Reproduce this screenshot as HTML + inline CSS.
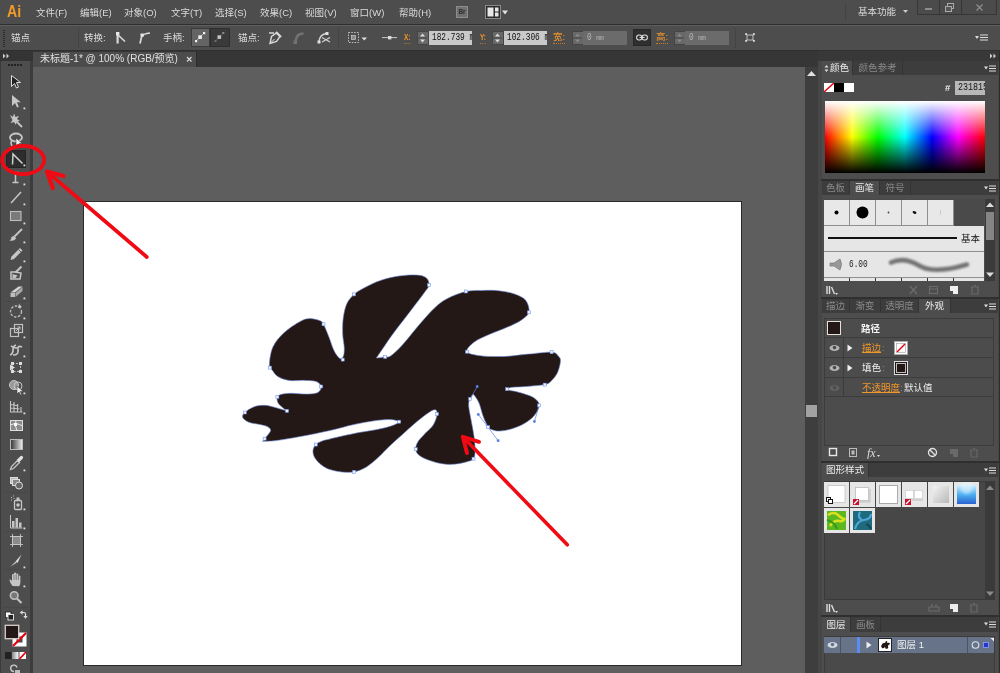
<!DOCTYPE html><html lang="zh"><head><meta charset="utf-8"><title>Adobe Illustrator</title><style>
*{margin:0;padding:0;box-sizing:border-box}
html,body{width:1000px;height:673px;overflow:hidden;background:#5d5d5d}
body{position:relative;opacity:0.999;font-family:"Liberation Sans","Noto Sans CJK SC",sans-serif;font-size:9.5px;color:#dadada;line-height:12px}
.a{position:absolute}
.t{position:absolute;white-space:nowrap}
.or{color:#f0962a}
.u{text-decoration:underline}
.menubar{left:0;top:0;width:1000px;height:25px;background:#4d4d4d;border-bottom:1px solid #2e2e2e}
.ctrl{left:0;top:25px;width:1000px;height:26px;background:#4d4d4d;border-bottom:1px solid #303030;border-top:1px solid #5f5f5f}
.tabs{left:33px;top:51px;width:785px;height:16px;background:#363636}
.doctab{left:33px;top:52px;width:164px;height:15px;background:#4c4c4c;border-right:1px solid #2c2c2c}
.tool{left:0;top:51px;width:33px;height:622px;background:#4d4d4d;border-right:3px solid #3c3c3c;border-left:1px solid #3a3a3a}
.toolhd{left:0;top:51px;width:33px;height:10px;background:#343434}
.canvas{left:33px;top:67px;width:772px;height:606px;background:#5e5e5e}
.vscroll{left:805px;top:67px;width:13px;height:606px;background:#3e3e3e}
.dock{left:818px;top:51px;width:182px;height:622px;background:#474747}
.dockhd{left:818px;top:51px;width:182px;height:10px;background:#383838}
.panel{position:absolute;left:822px;width:176px;background:#4d4d4d}
.tabrow{position:absolute;left:822px;width:176px;height:15px;background:#3d3d3d}
.tab{position:absolute;top:0;height:15px;text-align:center;line-height:15px;color:#8a8a8a;border-right:1px solid #333}
.tab.on{background:#4d4d4d;color:#ececec}
.inp{position:absolute;background:#c9c9c9;color:#111;height:14px;line-height:14px;font-family:"Liberation Mono","Noto Sans CJK SC",monospace;font-size:10px;white-space:nowrap;overflow:hidden}
.sq{display:inline-block;transform:scaleX(0.78);transform-origin:0 50%}
.inp.dis{background:#6b6b6b;color:#b4b4b4}
.spin{position:absolute;width:12px;height:14px;background:#686868;border:1px solid #454545}
</style></head><body>
<div class="a menubar"></div>
<div class="t" style="left:7px;top:1px;font-size:16.5px;line-height:20px;font-weight:bold;color:#f09a2a;transform:scaleX(0.86);transform-origin:0 0">Ai</div>
<div class="t" style="left:36px;top:7px">文件(F)</div>
<div class="t" style="left:80px;top:7px">编辑(E)</div>
<div class="t" style="left:124px;top:7px">对象(O)</div>
<div class="t" style="left:171px;top:7px">文字(T)</div>
<div class="t" style="left:215px;top:7px">选择(S)</div>
<div class="t" style="left:260px;top:7px">效果(C)</div>
<div class="t" style="left:305px;top:7px">视图(V)</div>
<div class="t" style="left:350px;top:7px">窗口(W)</div>
<div class="t" style="left:399px;top:7px">帮助(H)</div>
<div class="a" style="left:456px;top:6px;width:12px;height:12px;background:#707070;border:1px solid #8e8e8e;font-size:6.500px;line-height:10px;text-align:center;color:#2e2e2e;font-weight:bold">Br</div>
<svg class="a" style="left:485px;top:5px" width="26" height="14"><rect x="0.500" y="0.500" width="15" height="13" fill="#2c2c2c" stroke="#8a8a8a"/><rect x="2.500" y="2.500" width="6" height="9" fill="#e8e8e8"/><rect x="10" y="2.500" width="3.500" height="4" fill="#e8e8e8"/><rect x="10" y="7.500" width="3.500" height="4" fill="#e8e8e8"/><path d="M17 5.500h6l-3 4z" fill="#e2e2e2"/></svg>
<div class="a" style="left:845px;top:3px;width:1px;height:18px;background:#434343"></div>
<div class="t" style="left:858px;top:6px">基本功能</div>
<svg class="a" style="left:903px;top:10px" width="6" height="4"><path d="M0 0h5l-2.5 3z" fill="#ccc"/></svg>
<div class="a" style="left:917px;top:0;width:80px;height:15px;background:#4b4b4b;border:1px solid #363636;border-top:none"></div>
<div class="a" style="left:939px;top:0;width:1px;height:14px;background:#363636"></div><div class="a" style="left:961px;top:0;width:1px;height:14px;background:#363636"></div>
<div class="a" style="left:925px;top:8px;width:7px;height:2px;background:#8c8c8c"></div>
<svg class="a" style="left:944px;top:3px" width="12" height="10"><rect x="3.5" y="0.5" width="6" height="5" fill="none" stroke="#aaa"/><rect x="1.5" y="3.5" width="6" height="5" fill="#555" stroke="#aaa"/></svg>
<svg class="a" style="left:975px;top:3px" width="10" height="10"><path d="M1.500 1.500l6 6M7.500 1.500l-6 6" stroke="#8c8c8c" stroke-width="1.300"/></svg>
<div class="a ctrl"></div>
<div class="a" style="left:3px;top:30px;width:2px;height:17px;background:repeating-linear-gradient(#2c2c2c 0 1px,#4d4d4d 1px 2px)"></div>
<div class="t" style="left:11px;top:32px">锚点</div>
<div class="a" style="left:78px;top:28px;width:1px;height:20px;background:#444"></div>
<div class="t" style="left:84px;top:32px">转换:</div>
<svg class="a" style="left:114px;top:30px" width="40" height="16"><path d="M3.600 2v11.500" stroke="#d9d9d9" stroke-width="2.200" fill="none"/><path d="M4 5l7 6.500" stroke="#d9d9d9" stroke-width="1.700" fill="none"/><rect x="2" y="2" width="3.400" height="3.400" fill="#e6e6e6"/><path d="M26 13.500l1.500-6.500q1.500-3.500 8.500-4" stroke="#d9d9d9" stroke-width="1.700" fill="none"/><rect x="26.500" y="3.500" width="3.200" height="3.200" fill="#e6e6e6"/></svg>
<div class="t" style="left:163px;top:32px">手柄:</div>
<div class="a" style="left:191px;top:28px;width:19px;height:19px;background:#646464;border:1px solid #3a3a3a"></div>
<div class="a" style="left:210px;top:28px;width:20px;height:19px;background:#3a3a3a;border:1px solid #2e2e2e"></div>
<svg class="a" style="left:191px;top:28px" width="40" height="19"><path d="M5 13l8-8" stroke="#bdbdbd" stroke-width="0.800"/><rect x="7.300" y="7.300" width="3.600" height="3.600" fill="#f0f0f0"/><rect x="12" y="4" width="2.200" height="2.200" fill="#f0f0f0"/><rect x="4" y="12" width="2.200" height="2.200" fill="#f0f0f0"/><path d="M24 13.500l8.500-8.500" stroke="#6a6a6a" stroke-width="0.800"/><rect x="26.500" y="7.300" width="3.600" height="3.600" fill="#c4c4c4"/><rect x="31.300" y="4" width="2" height="2" fill="#8a8a8a"/><rect x="23.500" y="12" width="2" height="2" fill="#6a6a6a"/></svg>
<div class="t" style="left:238px;top:32px">锚点:</div>
<svg class="a" style="left:268px;top:29px" width="66" height="18"><path d="M1 4h5" stroke="#d8d8d8" stroke-width="1.500"/><path d="M2 14.500l1.500-7 5-3.500 3.500 3.500-3.500 5z" fill="none" stroke="#d8d8d8" stroke-width="1.400"/><path d="M2.500 14l4-4" stroke="#d8d8d8" stroke-width="1"/><path d="M8 3l5 5" stroke="#d8d8d8" stroke-width="2.200"/><path d="M27.500 14q0-9.500 8-9.500" stroke="#727272" stroke-width="2.600" fill="none"/><rect x="25.500" y="11.500" width="3.500" height="3.500" fill="#727272"/><path d="M51 13q0.500-8 8-8.500" stroke="#d0d0d0" stroke-width="1.500" fill="none"/><rect x="49.500" y="11.500" width="3" height="3" fill="#e0e0e0"/><rect x="57.500" y="3" width="3" height="3" fill="#e0e0e0"/><path d="M54 8.500l8 4.500M62 8.500l-8 4.500" stroke="#d0d0d0" stroke-width="1.200"/></svg>
<div class="a" style="left:338px;top:28px;width:1px;height:20px;background:#444"></div>
<svg class="a" style="left:347px;top:31px" width="22" height="13"><rect x="1.500" y="1.500" width="10" height="10" fill="none" stroke="#c4c4c4" stroke-dasharray="1.500 1.300"/><rect x="4.500" y="4.500" width="4" height="4" fill="#8a8a8a" stroke="#ddd" stroke-width="0.600"/><path d="M14.500 6.500h5.500l-2.750 3z" fill="#e0e0e0"/></svg>
<svg class="a" style="left:381px;top:33px" width="18" height="9"><path d="M1 4.6h15" stroke="#c8c8c8" stroke-width="1"/><rect x="7" y="3" width="3.4" height="3.4" fill="#dcdcdc"/></svg>
<div class="t or" style="left:404px;top:31px;border-bottom:1px dotted #c67c22;line-height:12px;font-size:9px;font-weight:bold;transform:scaleX(0.72);transform-origin:0 0">X:</div>
<div class="spin" style="left:417px;top:31px;height:14px"></div>
<svg class="a" style="left:417px;top:31px" width="11" height="14"><path d="M3 5.5h5l-2.5-3z" fill="#ddd"/><path d="M3 8.5h5l-2.5 3z" fill="#ddd"/><path d="M1 7h9" stroke="#444"/></svg>
<div class="inp" style="left:429px;top:31px;width:43px;padding-left:3.4px"><span class="sq">182.739 mm</span></div>
<div class="t or" style="left:480px;top:31px;border-bottom:1px dotted #c67c22;line-height:12px;font-size:9px;font-weight:bold;transform:scaleX(0.72);transform-origin:0 0">Y:</div>
<div class="spin" style="left:492px;top:31px;height:14px"></div>
<svg class="a" style="left:492px;top:31px" width="11" height="14"><path d="M3 5.5h5l-2.5-3z" fill="#ddd"/><path d="M3 8.5h5l-2.5 3z" fill="#ddd"/><path d="M1 7h9" stroke="#444"/></svg>
<div class="inp" style="left:504px;top:31px;width:43px;padding-left:3.4px"><span class="sq">102.306 mm</span></div>
<div class="t or" style="left:553px;top:31px;border-bottom:1px dotted #c67c22;line-height:12px;font-size:9.5px;font-weight:normal;transform:scaleX(1);transform-origin:0 0">宽:</div>
<div class="spin" style="left:572px;top:31px;height:14px"></div>
<svg class="a" style="left:572px;top:31px" width="11" height="14"><path d="M3 5.5h5l-2.5-3z" fill="#888"/><path d="M3 8.5h5l-2.5 3z" fill="#888"/><path d="M1 7h9" stroke="#444"/></svg>
<div class="inp dis" style="left:583px;top:31px;width:44px;padding-left:4px;line-height:14px"><span class="sq">0 <span style="font-size:8px">mm</span></span></div>
<div class="a" style="left:633px;top:29px;width:18px;height:17px;background:#2f2f2f;border:1px solid #272727"></div>
<svg class="a" style="left:635px;top:33px" width="14" height="9"><rect x="1.6" y="2" width="5.4" height="5" rx="2.4" fill="none" stroke="#dcdcdc" stroke-width="1.1"/><rect x="7" y="2" width="5.4" height="5" rx="2.4" fill="none" stroke="#dcdcdc" stroke-width="1.1"/><path d="M4.6 4.4h5" stroke="#dcdcdc" stroke-width="1.1"/></svg>
<div class="t or" style="left:656px;top:31px;border-bottom:1px dotted #c67c22;line-height:12px;font-size:9.5px;font-weight:normal;transform:scaleX(1);transform-origin:0 0">高:</div>
<div class="spin" style="left:674px;top:31px;height:14px"></div>
<svg class="a" style="left:674px;top:31px" width="11" height="14"><path d="M3 5.5h5l-2.5-3z" fill="#888"/><path d="M3 8.5h5l-2.5 3z" fill="#888"/><path d="M1 7h9" stroke="#444"/></svg>
<div class="inp dis" style="left:685px;top:31px;width:44px;padding-left:4px;line-height:14px"><span class="sq">0 <span style="font-size:8px">mm</span></span></div>
<div class="a" style="left:735px;top:28px;width:1px;height:20px;background:#444"></div>
<svg class="a" style="left:744px;top:32px" width="13" height="12"><rect x="3" y="3" width="6" height="5" fill="none" stroke="#cfcfcf" stroke-width="0.9"/><rect x="1.2" y="1.2" width="1.8" height="1.8" fill="#ddd"/><rect x="9" y="1.2" width="1.8" height="1.8" fill="#ddd"/><rect x="1.2" y="8" width="1.8" height="1.8" fill="#ddd"/><rect x="9" y="8" width="1.8" height="1.8" fill="#ddd"/></svg>
<svg class="a" style="left:975px;top:34px" width="14" height="8"><path d="M0 2h4l-2 3z" fill="#ddd"/><path d="M5 1h8M5 3.5h8M5 6h8" stroke="#ddd" stroke-width="1"/></svg>
<div class="a tabs"></div><div class="a doctab"></div>
<div class="t" style="left:40px;top:53px;color:#e0e0e0;font-size:10px">未标题-1* @ 100% (RGB/预览)</div>
<svg class="a" style="left:186px;top:56px" width="7" height="7"><path d="M1 1l4.5 4.5M5.500 1l-4.500 4.500" stroke="#ddd" stroke-width="1.1"/></svg>
<div class="a canvas"></div>
<div class="a" style="left:83px;top:201px;width:659px;height:465px;background:#fff;border:1px solid #2a2a2a"></div>
<div class="a vscroll"></div>
<svg class="a" style="left:807px;top:70px" width="10" height="7"><path d="M0 6h9l-4.500-5z" fill="#e0e0e0"/></svg>
<div class="a" style="left:806px;top:405px;width:11px;height:12px;background:#a2a2a2"></div><div class="a tool"></div><div class="a toolhd"></div>
<svg class="a" style="left:3px;top:53px" width="8" height="6"><path d="M0 0.500l2.500 2.500l-2.500 2.500zM3.500 0.500l2.500 2.500l-2.500 2.500z" fill="#cfcfcf"/></svg>
<div class="a" style="left:8px;top:64px;width:15px;height:2px;background:repeating-linear-gradient(90deg,#222 0 2px,#4d4d4d 2px 3px)"></div>
<div class="a" style="left:4px;top:148px;width:24px;height:1px;background:#474747"></div>
<div class="a" style="left:4px;top:301px;width:24px;height:1px;background:#474747"></div>
<div class="a" style="left:4px;top:492px;width:24px;height:1px;background:#474747"></div>
<div class="a" style="left:4px;top:531px;width:24px;height:1px;background:#474747"></div>
<div class="a" style="left:4px;top:569px;width:24px;height:1px;background:#474747"></div>
<div class="a" style="left:4px;top:607px;width:24px;height:1px;background:#474747"></div>
<div class="a" style="left:6px;top:150px;width:20px;height:18px;background:#2d2d2d;border:1px solid #252525"></div>
<svg class="a" style="left:0;top:0" width="33" height="673" viewBox="0 0 33 673"><g transform="translate(0,73)"><path d="M11.500 2.500v11l3-3 2 4.500 2-1-2-4.500h4z" fill="#222" stroke="#ddd" stroke-width="1"/></g><g transform="translate(0,92)"><path d="M12 3v11l3-3 2 4.500 1.800-0.800-2-4.500h4z" fill="#c6c6c6"/><rect x="23.500" y="15.500" width="1.800" height="1.800" fill="#e0e0e0"/></g><g transform="translate(0,111)"><path d="M10 4l3 2 1-3.500 1.500 3.500 3.500-1-2 3 3 2-3.500 0.500-0.500 3.500-2-3-3.500 1 2-3z" fill="#c6c6c6"/><path d="M15 9l7 7" stroke="#c6c6c6" stroke-width="1.800"/></g><g transform="translate(0,130)"><ellipse cx="16" cy="7.500" rx="6" ry="4" fill="none" stroke="#c6c6c6" stroke-width="1.800"/><path d="M12 10q-2 3 0 6" stroke="#c6c6c6" stroke-width="1.500" fill="none"/><path d="M16 8v8l2-2 1.500 3 1.200-0.600-1.500-3h3z" fill="#eee" stroke="#333" stroke-width="0.500"/></g><g transform="translate(0,149)"><path d="M12.500 15.500l0.500-10.500 9.500 9.500" fill="none" stroke="#cfcfcf" stroke-width="1.500"/><rect x="23.500" y="15.500" width="1.800" height="1.800" fill="#e0e0e0"/></g><g transform="translate(0,168)"><path d="M12 4.500h7M15.500 4.500v10M12.500 14.500h6" stroke="#c6c6c6" stroke-width="1.500" fill="none"/><rect x="23.500" y="15.500" width="1.800" height="1.800" fill="#e0e0e0"/></g><g transform="translate(0,188)"><path d="M11 15l10-11" stroke="#c6c6c6" stroke-width="1.500"/><rect x="23.500" y="15.500" width="1.800" height="1.800" fill="#e0e0e0"/></g><g transform="translate(0,207)"><rect x="10.500" y="4.500" width="10.500" height="9" fill="#7a7a7a" stroke="#bdbdbd" stroke-width="1.100"/><rect x="23.500" y="15.500" width="1.800" height="1.800" fill="#e0e0e0"/></g><g transform="translate(0,226)"><path d="M22 3l-7.500 7.500" stroke="#c6c6c6" stroke-width="1.800"/><path d="M13.800 9.800l2.400 2.400q-2 3.300-6.700 2.300 2.300-1 1.800-3.200z" fill="#c6c6c6"/><rect x="23.500" y="15.500" width="1.800" height="1.800" fill="#e0e0e0"/></g><g transform="translate(0,245)"><path d="M20 3l2.500 2.500-8.500 8.500-3.500 1 1-3.500z" fill="#c6c6c6"/><path d="M18.500 4.500l2.500 2.500" stroke="#4d4d4d" stroke-width="0.800"/><rect x="23.500" y="15.500" width="1.800" height="1.800" fill="#e0e0e0"/></g><g transform="translate(0,264)"><path d="M21.500 2.500l-6 6" stroke="#c6c6c6" stroke-width="2"/><path d="M11 8h4l6 1-1 6h-9z" fill="none" stroke="#c6c6c6" stroke-width="1.500"/><path d="M12.500 10l5 1.500-2 2.500h-3z" fill="#c6c6c6"/></g><g transform="translate(0,282)"><path d="M10.500 10.500l8-6h4l-7.500 6z" fill="#d2d2d2"/><path d="M10.500 11h4.500v4h-4.500z" fill="#bdbdbd"/><path d="M15.500 11l7-6v4l-7 6z" fill="#a8a8a8"/><rect x="23.500" y="15.500" width="1.800" height="1.800" fill="#e0e0e0"/></g><g transform="translate(0,302)"><circle cx="16" cy="9.500" r="5.500" fill="none" stroke="#c0c0c0" stroke-width="1.300" stroke-dasharray="2.500 1.500"/><path d="M19 2l3 3-4 1z" fill="#c6c6c6"/><rect x="23.500" y="15.500" width="1.800" height="1.800" fill="#e0e0e0"/></g><g transform="translate(0,321)"><rect x="10.500" y="7.500" width="8" height="8" fill="none" stroke="#c0c0c0" stroke-width="1.200"/><rect x="14.500" y="3.500" width="8" height="8" fill="none" stroke="#c0c0c0" stroke-width="1.200"/><path d="M16 10l4-4M17.500 6h2.500v2.500" stroke="#c0c0c0" stroke-width="1" fill="none"/><rect x="23.500" y="15.500" width="1.800" height="1.800" fill="#e0e0e0"/></g><g transform="translate(0,340)"><path d="M10 15q3-1 3-5t3-5M13 15q6 0 5-5t4-3M11 6q3 2 6 2" stroke="#c6c6c6" stroke-width="1.700" fill="none"/><rect x="23.500" y="15.500" width="1.800" height="1.800" fill="#e0e0e0"/></g><g transform="translate(0,358)"><rect x="12.500" y="5.500" width="8" height="8" fill="none" stroke="#c0c0c0" stroke-width="1" stroke-dasharray="2 1.500"/><rect x="11" y="4" width="3" height="3" fill="#ddd"/><rect x="19" y="4" width="3" height="3" fill="#ddd"/><rect x="11" y="12" width="3" height="3" fill="#ddd"/><rect x="19" y="12" width="3" height="3" fill="#ddd"/><path d="M10 6.500l5 3-5 3z" fill="#ddd"/></g><g transform="translate(0,377)"><circle cx="14" cy="8" r="4.500" fill="#999" stroke="#c6c6c6" stroke-width="1"/><circle cx="18" cy="9" r="4" fill="none" stroke="#c6c6c6" stroke-width="1"/><path d="M17 9v8l2-2 1.500 3 1.200-0.600-1.500-3h3z" fill="#eee" stroke="#333" stroke-width="0.500"/><rect x="23.500" y="15.500" width="1.800" height="1.800" fill="#e0e0e0"/></g><g transform="translate(0,397)"><path d="M10.500 4v11h12M10.500 7.500l8 1.500M10.500 11l9 1M14 5v10M17.500 7v8M21 10v5" stroke="#c6c6c6" stroke-width="1.100" fill="none"/><rect x="23.500" y="15.500" width="1.800" height="1.800" fill="#e0e0e0"/></g><g transform="translate(0,416)"><rect x="10.500" y="4.500" width="12" height="10" fill="#8c8c8c" stroke="#ddd" stroke-width="1"/><path d="M10.500 9q6-3 12 1M16 4.500q-2 5 1 10" stroke="#eee" stroke-width="1" fill="none"/><rect x="14" y="7" width="3" height="3" fill="#fff"/></g><g transform="translate(0,435)"><defs><linearGradient id="gt" x1="0" x2="1"><stop offset="0" stop-color="#333"/><stop offset="1" stop-color="#eee"/></linearGradient></defs><rect x="10.500" y="4.500" width="12" height="10" fill="url(#gt)" stroke="#bbb" stroke-width="1"/></g><g transform="translate(0,454)"><path d="M21.500 3.500l-3 3" stroke="#e0e0e0" stroke-width="3.200" stroke-linecap="round"/><path d="M18 6l-6.500 6.500-1 3 3-1 6.500-6.500" fill="none" stroke="#c6c6c6" stroke-width="1.300"/><rect x="23.500" y="15.500" width="1.800" height="1.800" fill="#e0e0e0"/></g><g transform="translate(0,473)"><rect x="10.500" y="4.500" width="7" height="6" fill="#bbb" stroke="#ddd"/><rect x="12.500" y="6.500" width="7" height="6" fill="#888" stroke="#ddd"/><circle cx="19" cy="12.500" r="3.500" fill="#666" stroke="#ddd"/></g><g transform="translate(0,493)"><rect x="14.500" y="7.500" width="7" height="9" rx="1" fill="none" stroke="#c6c6c6" stroke-width="1.300"/><rect x="16.500" y="4.500" width="3" height="3" fill="#c6c6c6"/><circle cx="18" cy="12" r="1.800" fill="#c6c6c6"/><path d="M11 4.500h1M13 3h1M11 7h1M13.500 5.500h1" stroke="#c6c6c6" stroke-width="1"/><rect x="23.500" y="15.500" width="1.800" height="1.800" fill="#e0e0e0"/></g><g transform="translate(0,512)"><path d="M10.500 3v13h12" stroke="#c6c6c6" stroke-width="1" fill="none"/><rect x="12" y="9" width="2.500" height="6.500" fill="#c6c6c6"/><rect x="15.500" y="6" width="2.500" height="9.500" fill="#c6c6c6"/><rect x="19" y="10.500" width="2.500" height="5" fill="#c6c6c6"/><rect x="23.500" y="15.500" width="1.800" height="1.800" fill="#e0e0e0"/></g><g transform="translate(0,531)"><rect x="12.500" y="5.500" width="8" height="8" fill="#8a8a8a" stroke="#c6c6c6"/><path d="M10 5.500h13M10 13.500h13M12.500 3v13M20.500 3v13" stroke="#c6c6c6" stroke-width="0.900"/></g><g transform="translate(0,551)"><path d="M21.500 3.500l-6 7 2 1.500z" fill="#e0e0e0"/><path d="M15.500 10.500l-5 5 6-3.500z" fill="#bdbdbd"/><rect x="23.500" y="15.500" width="1.800" height="1.800" fill="#e0e0e0"/></g><g transform="translate(0,570)"><path d="M12.500 16q-3-4-3-6.500 1.500-0.500 2.500 1.500v-6.500q1.200-1.200 2 0v-1.500q1.200-1.200 2.200 0v1q1.200-1 2.200 0.300v1.500q1.200-0.800 2 0.400v6q0 2.500-1.500 4z" fill="#c6c6c6"/><path d="M14 5v5M16.200 4v6M18.400 5v5" stroke="#4d4d4d" stroke-width="0.600"/><rect x="23.500" y="15.500" width="1.800" height="1.800" fill="#e0e0e0"/></g><g transform="translate(0,588)"><circle cx="14.200" cy="7.500" r="3.800" fill="#777" stroke="#c0c0c0" stroke-width="1.600"/><path d="M17 10.500l4.500 4.500" stroke="#c0c0c0" stroke-width="2.200"/></g>
<rect x="5.500" y="612" width="5.500" height="5.500" fill="#fff" stroke="#222" stroke-width="0.800"/><rect x="8" y="614.500" width="5.500" height="5.500" fill="#222" stroke="#eee" stroke-width="0.900"/>
<path d="M21.500 612.500h2.500q1.500 0 1.500 1.500v2.500" fill="none" stroke="#ddd" stroke-width="1.200"/><path d="M19.800 612.500l2.700-2.200v4.400zM25.500 618.800l-2.200-2.700h4.400z" fill="#ddd"/>
<rect x="12.500" y="632.500" width="14" height="14" fill="#fff"/><rect x="16.500" y="636.500" width="6" height="6" fill="#4a4a4a"/><path d="M13 646l13-13" stroke="#e60012" stroke-width="2.200"/>
<rect x="5.300" y="625.300" width="13.400" height="13.400" fill="#231815" stroke="#d8d0cc" stroke-width="1.300"/>
<rect x="5" y="652" width="6.500" height="7" fill="#222"/><defs><linearGradient id="g2" x1="0" x2="1"><stop offset="0" stop-color="#888"/><stop offset="1" stop-color="#fff"/></linearGradient></defs><rect x="12" y="652" width="6.500" height="7" fill="url(#g2)"/><rect x="19.500" y="652" width="6.500" height="7" fill="#fff"/><path d="M19.500 659l6.500-7" stroke="#e60012" stroke-width="1.800"/>
<path d="M17 667.500a3.200 3.200 0 1 0 -3 4" fill="none" stroke="#ccc" stroke-width="1.300"/><rect x="15" y="670" width="5" height="3" fill="#bbb"/>
</svg><div class="a dock"></div><div class="a dockhd"></div>
<div class="a" style="left:998.5px;top:51px;width:1.5px;height:622px;background:#2c2c2c"></div>
<div class="a" style="left:821px;top:179px;width:179px;height:2px;background:#2f2f2f"></div>
<div class="a" style="left:821px;top:297px;width:179px;height:2px;background:#2f2f2f"></div>
<div class="a" style="left:821px;top:461px;width:179px;height:2px;background:#2f2f2f"></div>
<div class="a" style="left:821px;top:615px;width:179px;height:2px;background:#2f2f2f"></div>
<svg class="a" style="left:990px;top:53px" width="8" height="6"><path d="M0 0.500l2.500 2.500l-2.500 2.500zM3.500 0.500l2.500 2.500l-2.500 2.500z" fill="#cfcfcf"/></svg>
<div class="panel" style="top:61px;height:118px"></div>
<div class="tabrow" style="top:61px;height:14px">
<div class="tab on" style="left:0px;width:31px;height:14px;line-height:14px"></div>
<div class="tab" style="left:31px;width:50px;height:14px;line-height:14px">颜色参考</div>
</div>
<svg class="a" style="left:984px;top:65px" width="13" height="8"><path d="M0 1.500h4l-2 3z" fill="#ddd"/><path d="M5 1h7M5 3.500h7M5 6h7" stroke="#ddd" stroke-width="1"/></svg>
<svg class="a" style="left:824px;top:64px" width="6" height="9"><path d="M0.500 3.500l2-2.500 2 2.500zM0.500 5.500l2 2.500 2-2.500z" fill="#ddd"/></svg>
<div class="t" style="left:830px;top:62px;color:#ececec">颜色</div>
<svg class="a" style="left:824px;top:83px" width="31" height="10"><rect x="0" y="0" width="10" height="9" fill="#fff"/><path d="M0 9l10-9" stroke="#e60012" stroke-width="1.500"/><rect x="10" y="0" width="10" height="9" fill="#000"/><rect x="20" y="0" width="10" height="9" fill="#fff"/></svg>
<div class="t" style="left:945px;top:82px;font-weight:bold;color:#eee">#</div>
<div class="inp" style="left:955px;top:81px;width:30px;height:14px;padding-left:3.4px;background:#b8b8b8;line-height:13px;font-size:11px"><span class="sq" style="transform:scaleX(0.76)">231815</span></div>
<div class="a" style="left:825px;top:101px;width:160px;height:72px;background:linear-gradient(to bottom,#fff 0%,rgba(255,255,255,0) 50%,rgba(0,0,0,0) 50%,#000 100%),linear-gradient(to right,#f00 0%,#ff0 17%,#0f0 33%,#0ff 50%,#00f 67%,#f0f 83%,#f00 100%)"></div>
<div class="panel" style="top:181px;height:116px"></div>
<div class="tabrow" style="top:181px;height:14px">
<div class="tab" style="left:0px;width:28px;height:14px;line-height:14px">色板</div>
<div class="tab on" style="left:28px;width:30px;height:14px;line-height:14px">画笔</div>
<div class="tab" style="left:58px;width:31px;height:14px;line-height:14px">符号</div>
</div>
<svg class="a" style="left:984px;top:185px" width="13" height="8"><path d="M0 1.500h4l-2 3z" fill="#ddd"/><path d="M5 1h7M5 3.500h7M5 6h7" stroke="#ddd" stroke-width="1"/></svg>
<div class="a" style="left:824px;top:199px;width:160px;height:82px;background:#8e8e8e"></div><div class="a" style="left:954px;top:199px;width:30px;height:27px;background:#4a4a4a"></div><div class="a" style="left:824px;top:199px;width:160px;height:1px;background:#4a4a4a"></div>
<div class="a" style="left:824px;top:200px;width:25px;height:25px;background:#e8e8e8"></div>
<div class="a" style="left:850px;top:200px;width:25px;height:25px;background:#e8e8e8"></div>
<div class="a" style="left:876px;top:200px;width:25px;height:25px;background:#e8e8e8"></div>
<div class="a" style="left:902px;top:200px;width:25px;height:25px;background:#e8e8e8"></div>
<div class="a" style="left:928px;top:200px;width:25px;height:25px;background:#e8e8e8"></div>
<svg class="a" style="left:824px;top:200px" width="130" height="25"><circle cx="12.500" cy="12.500" r="2" fill="#000"/><circle cx="38.500" cy="12.500" r="6" fill="#000"/><circle cx="64.500" cy="12.500" r="0.900" fill="#444"/><ellipse cx="90.500" cy="12.500" rx="2" ry="1.200" fill="#111" transform="rotate(20 90.500 12.500)"/><path d="M116.500 10v5" stroke="#bbb" stroke-width="0.600"/></svg>
<div class="a" style="left:824px;top:226px;width:160px;height:25px;background:#e6e6e6"></div>
<div class="a" style="left:828px;top:237px;width:129px;height:2px;background:#111"></div>
<div class="t" style="left:961px;top:233px;color:#111">基本</div>
<div class="a" style="left:824px;top:252px;width:160px;height:25px;background:#e6e6e6"></div>
<svg class="a" style="left:828px;top:257px" width="16" height="14"><path d="M2 6h4l6-4q3 5 0 11l-6-4h-4z" fill="#999" stroke="#777" stroke-width="0.700"/></svg>
<div class="t" style="left:849px;top:259px;color:#222;font-family:'Liberation Mono',monospace;font-size:10px"><span class="sq">6.00</span></div>
<svg class="a" style="left:885px;top:254px" width="100" height="24"><path d="M6 8.500q13-6 28 3t48-1" fill="none" stroke="#666" stroke-width="4.600" stroke-linecap="round" opacity="0.900" style="filter:blur(0.8px)"/></svg>
<div class="a" style="left:824px;top:278px;width:160px;height:3px;background:#e6e6e6"></div>
<div class="a" style="left:849px;top:278px;width:1px;height:3px;background:#333"></div>
<div class="a" style="left:875px;top:278px;width:1px;height:3px;background:#333"></div>
<div class="a" style="left:901px;top:278px;width:1px;height:3px;background:#333"></div>
<div class="a" style="left:927px;top:278px;width:1px;height:3px;background:#333"></div>
<div class="a" style="left:953px;top:278px;width:1px;height:3px;background:#333"></div>
<div class="a" style="left:985px;top:199px;width:10px;height:82px;background:#3a3a3a"></div>
<svg class="a" style="left:986px;top:202px" width="8" height="6"><path d="M0 5h8l-4-4.500z" fill="#ddd"/></svg>
<svg class="a" style="left:986px;top:272px" width="8" height="6"><path d="M0 0.500h8l-4 4.500z" fill="#ddd"/></svg>
<div class="a" style="left:986px;top:212px;width:8px;height:28px;background:#858585"></div>
<svg class="a" style="left:826px;top:284px" width="160" height="12"><path d="M1 10v-8M3.500 10v-8M5.500 3l3 7" stroke="#ddd" stroke-width="1.400" fill="none"/><path d="M9 9h3l-1.500 2z" fill="#ddd"/><path d="M84 2l7 8M91 2l-7 8" stroke="#6c6c6c" stroke-width="1.200"/><rect x="103.500" y="2.500" width="8" height="7" fill="none" stroke="#6c6c6c"/><path d="M103.500 5h8" stroke="#6c6c6c"/><path d="M124 2h8v8h-5v-3h-3z" fill="#eee"/><path d="M145 3h8M146 3v7h6v-7M148 1.500h2" stroke="#6a6a6a" stroke-width="1.200" fill="none"/></svg>
<div class="panel" style="top:299px;height:162px"></div>
<div class="tabrow" style="top:299px;height:14px">
<div class="tab" style="left:0px;width:28px;height:14px;line-height:14px">描边</div>
<div class="tab" style="left:28px;width:31px;height:14px;line-height:14px">渐变</div>
<div class="tab" style="left:59px;width:38px;height:14px;line-height:14px">透明度</div>
<div class="tab on" style="left:97px;width:32px;height:14px;line-height:14px">外观</div>
</div>
<svg class="a" style="left:984px;top:303px" width="13" height="8"><path d="M0 1.500h4l-2 3z" fill="#ddd"/><path d="M5 1h7M5 3.500h7M5 6h7" stroke="#ddd" stroke-width="1"/></svg>
<div class="a" style="left:824px;top:318px;width:170px;height:128px;background:#4c4c4c;border:1px solid #3c3c3c"></div>
<div class="a" style="left:825px;top:337px;width:168px;height:1px;background:#3c3c3c"></div>
<div class="a" style="left:825px;top:357px;width:168px;height:1px;background:#3c3c3c"></div>
<div class="a" style="left:825px;top:377px;width:168px;height:1px;background:#3c3c3c"></div>
<div class="a" style="left:825px;top:396px;width:168px;height:1px;background:#3c3c3c"></div>
<div class="a" style="left:843px;top:338px;width:1px;height:58px;background:#3c3c3c"></div>
<div class="a" style="left:827px;top:321px;width:14px;height:14px;background:#231815;border:1.5px solid #e4e0dc"></div>
<div class="t" style="left:861px;top:323px;font-weight:bold;color:#f4f4f4">路径</div>
<svg class="a" style="left:829px;top:344px" width="11" height="8"><ellipse cx="5.500" cy="4" rx="5" ry="3" fill="#b4b4b4"/><circle cx="5.500" cy="3.600" r="1.800" fill="#4c4c4c"/></svg>
<svg class="a" style="left:829px;top:364px" width="11" height="8"><ellipse cx="5.500" cy="4" rx="5" ry="3" fill="#b4b4b4"/><circle cx="5.500" cy="3.600" r="1.800" fill="#4c4c4c"/></svg>
<svg class="a" style="left:829px;top:384px" width="11" height="8"><ellipse cx="5.500" cy="4" rx="5" ry="3" fill="#606060"/><circle cx="5.500" cy="3.600" r="1.800" fill="#4c4c4c"/></svg>
<svg class="a" style="left:847px;top:344px" width="6" height="8"><path d="M0.500 0.500v7l5-3.500z" fill="#eee"/></svg>
<svg class="a" style="left:847px;top:364px" width="6" height="8"><path d="M0.500 0.500v7l5-3.500z" fill="#eee"/></svg>
<div class="t or u" style="left:862px;top:342px">描边</div><div class="t" style="left:882px;top:342px;color:#888">:</div>
<svg class="a" style="left:894px;top:341px" width="14" height="14"><rect x="0.500" y="0.500" width="13" height="13" fill="#fff" stroke="#aaa"/><rect x="2.500" y="2.500" width="9" height="9" fill="#fff" stroke="#999" stroke-width="0.600"/><path d="M3 11l8-8" stroke="#e60012" stroke-width="1.500"/></svg>
<div class="t" style="left:862px;top:362px;color:#eee">填色</div><div class="t" style="left:882px;top:362px;color:#888">:</div>
<svg class="a" style="left:894px;top:361px" width="14" height="14"><rect x="0.500" y="0.500" width="13" height="13" fill="#231815" stroke="#ddd"/><rect x="2.500" y="2.500" width="9" height="9" fill="#231815" stroke="#bbb" stroke-width="1"/></svg>
<div class="t or u" style="left:862px;top:382px">不透明度</div><div class="t" style="left:900px;top:382px;color:#888">:</div><div class="t" style="left:904px;top:382px;color:#eee">默认值</div>
<svg class="a" style="left:826px;top:447px" width="160" height="12"><rect x="3.500" y="1.500" width="7" height="7" fill="none" stroke="#e8e8e8" stroke-width="1.400"/><rect x="23.500" y="1.500" width="7" height="8" fill="none" stroke="#bbb"/><rect x="25.500" y="3.500" width="3" height="4" fill="#bbb"/><text x="41" y="10" font-family="Liberation Serif,serif" font-style="italic" font-size="12" fill="#ddd">fx</text><path d="M51 8h3l-1.500 2z" fill="#ddd"/><circle cx="106.500" cy="5.500" r="4" fill="none" stroke="#e0e0e0" stroke-width="1.400"/><path d="M103.500 2.500l6 6" stroke="#e0e0e0" stroke-width="1.400"/><path d="M124 2h8v8h-5v-3h-3z" fill="#6a6a6a"/><path d="M144 3h8M145 3v7h6v-7M147 1.500h2" stroke="#666" stroke-width="1.200" fill="none"/></svg>
<div class="panel" style="top:463px;height:152px"></div>
<div class="tabrow" style="top:463px;height:14px">
<div class="tab on" style="left:0px;width:47px;height:14px;line-height:14px">图形样式</div>
</div>
<svg class="a" style="left:984px;top:467px" width="13" height="8"><path d="M0 1.500h4l-2 3z" fill="#ddd"/><path d="M5 1h7M5 3.500h7M5 6h7" stroke="#ddd" stroke-width="1"/></svg>
<div class="a" style="left:824px;top:481px;width:171px;height:119px;background:#474747;border:1px solid #3a3a3a"></div>
<div class="a" style="left:824px;top:482px;width:25px;height:25px;background:#e6e6e6"></div>
<div class="a" style="left:850px;top:482px;width:25px;height:25px;background:#e6e6e6"></div>
<div class="a" style="left:876px;top:482px;width:25px;height:25px;background:#e6e6e6"></div>
<div class="a" style="left:902px;top:482px;width:25px;height:25px;background:#e6e6e6"></div>
<div class="a" style="left:928px;top:482px;width:25px;height:25px;background:#e6e6e6"></div>
<div class="a" style="left:954px;top:482px;width:25px;height:25px;background:#e6e6e6"></div>
<div class="a" style="left:824px;top:508px;width:25px;height:25px;background:#e6e6e6"></div>
<div class="a" style="left:850px;top:508px;width:25px;height:25px;background:#e6e6e6"></div>
<svg class="a" style="left:824px;top:482px" width="156" height="52"><defs><linearGradient id="sg" x1="0" y1="0" x2="1" y2="1"><stop offset="0" stop-color="#f4f4f4"/><stop offset="1" stop-color="#b8b8b8"/></linearGradient><linearGradient id="sb" x1="0" y1="0" x2="0" y2="1"><stop offset="0" stop-color="#cfeeff"/><stop offset="0.500" stop-color="#4db0f0"/><stop offset="1" stop-color="#2a63d0"/></linearGradient></defs><rect x="4" y="3.500" width="17" height="17" fill="#fff" stroke="#bbb" stroke-width="0.700"/><rect x="2.500" y="15.500" width="4" height="4" fill="#fff" stroke="#111"/><rect x="4.500" y="17.500" width="4" height="4" fill="#fff" stroke="#111"/><rect x="31.500" y="5.500" width="13" height="13" fill="#fff" stroke="#bbb" stroke-width="0.800"/><path d="M33 20h13v-13" stroke="#bbb" stroke-width="1" fill="none"/><rect x="29" y="17" width="6" height="6" fill="#c8102e"/><path d="M30 22l4-4" stroke="#fff" stroke-width="1.200"/><rect x="55.500" y="3.500" width="18" height="18" fill="#fff" stroke="#aaa" stroke-width="1"/><rect x="81.500" y="8.500" width="8" height="8" fill="#fff" stroke="#ccc" stroke-width="0.700"/><rect x="90.500" y="8.500" width="8" height="8" fill="#fff" stroke="#ccc" stroke-width="0.700"/><path d="M88 18h11" stroke="#bbb"/><rect x="81" y="17" width="6" height="6" fill="#c8102e"/><path d="M82 22l4-4" stroke="#fff" stroke-width="1.200"/><rect x="109" y="4" width="16" height="17" fill="url(#sg)"/><rect x="133" y="3" width="19" height="19" fill="url(#sb)"/><ellipse cx="142.500" cy="5" rx="6" ry="7" fill="#e8f8ff" opacity="0.550" style="filter:blur(1.5px)"/><rect x="3" y="29" width="19" height="19" fill="#5cb81e"/><path d="M4 33q6-4 10 0t7 4M6 44q4-6 9-5t6-3" stroke="#d8e020" stroke-width="2.500" fill="none"/><path d="M3 38q8 2 10 9" stroke="#2f9a1e" stroke-width="2" fill="none"/><rect x="29" y="29" width="19" height="19" fill="#1f6a7e"/><path d="M31 47q2-8 9-9t7-6M36 30q-3 5 2 8" stroke="#4da8d8" stroke-width="2.200" fill="none"/><path d="M42 42q3 1 5 5" stroke="#154a52" stroke-width="2" fill="none"/></svg>
<div class="a" style="left:985px;top:482px;width:10px;height:117px;background:#3a3a3a"></div>
<svg class="a" style="left:986px;top:485px" width="8" height="6"><path d="M0 5h8l-4-4.500z" fill="#8a8a8a"/></svg>
<svg class="a" style="left:986px;top:591px" width="8" height="6"><path d="M0 0.500h8l-4 4.500z" fill="#8a8a8a"/></svg>
<svg class="a" style="left:826px;top:602px" width="160" height="12"><path d="M1 10v-8M3.500 10v-8M5.500 3l3 7" stroke="#ddd" stroke-width="1.400" fill="none"/><path d="M9 9h3l-1.500 2z" fill="#ddd"/><path d="M103 5h10v4h-10zM106 5v-3M110 5v-3" stroke="#6c6c6c" stroke-width="1.200" fill="none"/><path d="M124 2h8v8h-5v-3h-3z" fill="#eee"/><path d="M144 3h8M145 3v7h6v-7M147 1.500h2" stroke="#6a6a6a" stroke-width="1.200" fill="none"/></svg>
<div class="panel" style="top:617px;height:56px"></div>
<div class="tabrow" style="top:617px;height:15px">
<div class="tab on" style="left:0px;width:29px;height:15px;line-height:15px">图层</div>
<div class="tab" style="left:29px;width:30px;height:15px;line-height:15px">画板</div>
</div>
<svg class="a" style="left:984px;top:621px" width="13" height="8"><path d="M0 1.500h4l-2 3z" fill="#ddd"/><path d="M5 1h7M5 3.500h7M5 6h7" stroke="#ddd" stroke-width="1"/></svg>
<div class="a" style="left:824px;top:636px;width:171px;height:37px;background:#4a4a4a;border:1px solid #3c3c3c;border-bottom:none"></div>
<div class="a" style="left:824px;top:637px;width:170px;height:16px;background:#667389"></div>
<div class="a" style="left:840px;top:637px;width:1px;height:16px;background:#4a5466"></div><div class="a" style="left:967px;top:637px;width:1px;height:16px;background:#4a5466"></div>
<div class="a" style="left:857px;top:637px;width:3px;height:16px;background:#5b8cf5"></div>
<svg class="a" style="left:827px;top:641px" width="11" height="8"><ellipse cx="5.500" cy="4" rx="5" ry="3" fill="#d4d8e0"/><circle cx="5.500" cy="3.600" r="1.800" fill="#667389"/></svg>
<svg class="a" style="left:866px;top:641px" width="6" height="8"><path d="M0.500 0.500v7l5-3.500z" fill="#eee"/></svg>
<svg class="a" style="left:878px;top:638px" width="15" height="14"><rect x="0.500" y="0.500" width="13" height="13" fill="#fff" stroke="#222"/><path d="M3 8q2-4 4-3l1-2q2 0 1 2 3-1 3 1-2 1-2 2 1 2-1 3-2 0-2-2-2 2-3 1z" fill="#231815"/></svg>
<div class="t" style="left:897px;top:639px;color:#f0f0f0">图层 1</div>
<svg class="a" style="left:970px;top:638px" width="26" height="14"><circle cx="5.500" cy="7" r="3.300" fill="none" stroke="#dfe3ea" stroke-width="1.100"/><rect x="13.500" y="4.500" width="5" height="5" fill="#2338c8" stroke="#8ea0ff" stroke-width="0.800"/><path d="M20.500 0h3.500v3.500z" fill="#eee"/></svg><svg class="a" style="left:0;top:0;pointer-events:none" width="1000" height="673" viewBox="0 0 1000 673">
<path d="M269.4 364.7C269.5 360.9 270.4 352.4 272.9 347.0C275.4 341.6 279.6 336.9 284.2 332.6C288.8 328.3 295.9 323.7 300.2 321.4C304.5 319.1 306.6 318.7 309.8 318.6C313.0 318.5 317.2 319.7 319.5 320.6C321.8 321.6 321.9 321.5 323.5 324.3C325.1 327.1 327.4 333.2 329.1 337.4C330.8 341.6 332.1 346.4 333.5 349.5C334.9 352.6 336.0 354.2 337.2 355.8C338.4 357.4 339.7 358.9 340.8 358.8C341.9 358.8 343.0 357.5 343.6 355.5C344.2 353.5 344.4 350.6 344.2 347.0C344.0 343.4 342.9 339.0 342.7 334.2C342.5 329.4 342.5 323.3 343.2 318.2C343.9 313.1 345.0 307.7 346.8 303.7C348.6 299.7 351.1 297.1 354.0 294.4C356.9 291.7 360.0 290.0 364.4 287.7C368.8 285.4 374.7 282.3 380.5 280.4C386.3 278.4 393.0 276.9 399.0 276.0C405.0 275.1 412.0 274.7 416.5 275.0C421.0 275.3 424.1 276.1 426.2 277.8C428.3 279.5 429.3 282.6 429.0 285.0C428.7 287.4 427.8 287.9 424.6 292.3C421.5 296.7 415.2 304.8 410.1 311.5C405.0 318.2 398.6 326.2 394.0 332.4C389.4 338.6 385.7 344.2 382.8 348.5C379.9 352.8 376.4 358.0 376.4 358.0C376.4 358.0 382.8 357.4 385.2 357.0C387.6 356.6 388.1 357.6 390.9 355.7C393.7 353.8 397.6 350.2 402.1 345.3C406.6 340.4 412.8 332.2 418.1 326.0C423.5 319.8 429.4 312.9 434.2 308.3C439.0 303.8 441.7 301.5 447.0 298.7C452.3 295.9 460.1 292.9 466.0 291.5C471.9 290.1 476.9 290.5 482.3 290.4C487.7 290.3 493.0 290.1 498.4 290.7C503.8 291.3 509.8 292.3 514.4 293.9C519.0 295.5 523.3 297.2 525.7 300.3C528.1 303.4 529.7 309.0 528.9 312.3C528.1 315.6 524.6 317.8 520.9 320.4C517.1 322.9 511.5 325.3 506.4 327.6C501.3 329.9 495.8 331.6 490.4 334.0C485.0 336.4 478.2 339.1 474.3 342.0C470.4 344.9 466.0 349.2 467.0 351.5C468.0 353.8 473.9 354.9 480.1 355.7C486.3 356.5 496.2 356.8 504.2 356.5C512.2 356.2 520.4 354.8 528.3 354.1C536.2 353.4 546.5 351.8 551.6 352.2C556.7 352.6 557.3 354.9 558.8 356.5C560.3 358.1 560.7 359.3 560.4 362.1C560.1 364.9 558.8 370.1 557.2 373.3C555.6 376.5 552.9 379.5 550.8 381.4C548.7 383.3 548.2 383.8 544.7 384.6C541.2 385.4 534.5 385.8 529.9 386.2C525.3 386.6 520.2 386.8 517.0 387.0C513.8 387.2 512.1 387.2 510.5 387.6C508.9 388.0 507.6 388.7 507.6 389.2C507.6 389.7 508.9 390.2 510.5 390.6C512.1 391.0 513.8 390.9 517.0 391.8C520.2 392.7 526.7 394.5 529.9 395.8C533.1 397.1 534.8 398.2 536.3 399.8C537.8 401.4 539.5 402.8 539.2 405.4C538.9 407.9 537.1 412.2 534.7 415.1C532.4 418.1 528.9 420.8 525.1 423.1C521.4 425.4 516.5 427.4 512.2 428.7C507.9 430.0 502.9 431.0 499.4 431.1C495.9 431.2 493.3 430.2 491.4 429.5C489.5 428.8 489.5 429.2 488.2 427.1C486.9 425.0 484.8 420.6 483.3 416.7C481.8 412.8 480.6 407.1 479.3 403.8C478.0 400.5 476.6 398.6 475.5 397.0C474.4 395.4 473.0 394.0 473.0 394.0C473.0 394.0 470.5 397.4 469.8 399.3C469.1 401.2 468.5 402.2 468.7 405.7C468.9 409.2 470.2 415.0 471.1 420.1C472.0 425.2 473.3 431.1 474.0 436.2C474.7 441.3 475.2 446.9 475.1 450.6C475.0 454.4 475.0 456.8 473.5 458.7C472.0 460.6 469.6 461.0 466.3 461.9C463.0 462.8 457.5 464.0 453.5 464.3C449.5 464.6 446.1 464.4 442.2 463.8C438.3 463.2 433.8 462.0 429.9 460.6C426.0 459.2 421.4 457.1 419.0 455.2C416.6 453.3 415.9 451.4 415.7 449.2C415.5 447.0 416.4 444.3 417.8 441.9C419.2 439.5 421.5 437.3 423.9 434.7C426.3 432.1 430.3 428.9 432.3 426.3C434.3 423.7 435.1 421.2 435.9 419.1C436.7 417.1 436.8 415.4 436.9 414.0C437.0 412.6 437.1 411.3 436.5 410.6C435.9 409.9 435.2 409.4 433.5 410.0C431.8 410.6 429.5 412.0 426.3 414.3C423.1 416.6 418.2 420.5 414.2 423.9C410.2 427.3 406.2 431.1 402.2 434.7C398.2 438.3 394.2 441.7 390.2 445.5C386.2 449.3 382.1 454.0 378.1 457.6C374.1 461.2 370.1 464.8 366.1 467.2C362.1 469.6 358.1 471.0 354.1 471.8C350.1 472.6 346.0 472.4 342.0 472.0C338.0 471.6 333.5 470.8 330.0 469.6C326.5 468.4 323.7 466.7 321.1 464.7C318.5 462.7 316.0 459.9 314.6 457.5C313.2 455.1 312.8 452.4 313.0 450.3C313.2 448.2 314.4 446.1 315.8 444.6C317.2 443.1 318.7 442.3 321.1 441.4C323.5 440.4 324.5 440.2 330.0 438.9C335.5 437.6 346.1 435.1 354.1 433.5C362.1 431.9 372.1 430.5 378.1 429.3C384.1 428.1 387.0 427.3 390.2 426.3C393.4 425.3 395.9 424.1 397.4 423.3C398.9 422.5 399.2 421.7 399.2 421.7C399.2 421.7 396.1 419.9 392.6 419.7C389.1 419.5 384.5 419.5 378.1 420.3C371.7 421.1 362.1 422.8 354.1 424.5C346.1 426.2 339.0 428.5 330.0 430.5C321.0 432.5 309.2 434.9 300.2 436.6C291.2 438.3 282.4 439.8 276.1 440.6C269.8 441.4 262.5 441.4 262.5 441.4C262.5 441.4 263.3 440.4 264.6 438.7C265.9 437.0 269.9 432.9 270.5 431.0C271.1 429.1 269.8 428.1 268.1 427.0C266.4 425.9 263.3 425.4 260.1 424.6C256.9 423.8 251.7 423.4 248.8 422.2C245.9 421.0 243.4 419.0 242.7 417.4C242.0 415.8 243.0 414.2 244.8 412.5C246.6 410.8 250.3 408.1 253.7 406.9C257.0 405.7 261.2 405.2 264.9 405.3C268.6 405.4 272.4 406.8 276.1 407.7C279.8 408.6 287.0 410.9 287.0 410.9C287.0 410.9 280.1 406.0 278.5 403.7C276.9 401.4 276.7 398.6 277.4 397.0C278.1 395.4 280.0 394.7 282.5 394.1C285.0 393.5 288.2 393.3 292.2 393.3C296.2 393.3 302.3 394.2 306.6 394.1C310.9 394.0 315.5 393.8 317.9 392.5C320.3 391.2 321.4 388.3 321.1 386.5C320.8 384.7 319.0 382.6 316.3 381.6C313.6 380.6 309.6 380.6 305.0 380.4C300.4 380.2 293.6 381.1 289.0 380.4C284.4 379.7 280.5 378.1 277.7 376.4C274.9 374.7 273.5 371.9 272.1 370.0C270.7 368.1 269.3 368.5 269.4 364.7Z" fill="#231815" stroke="#6d8ad8" stroke-width="0.6"/>
<path d="M470.2 399L477.2 386.5" stroke="#5a7fe0" stroke-width="0.7"/><circle cx="477.2" cy="386.5" r="1.4" fill="#5a7fe0"/>
<path d="M488.2 427.3L478.3 414.5" stroke="#5a7fe0" stroke-width="0.7"/><circle cx="478.3" cy="414.5" r="1.4" fill="#5a7fe0"/>
<path d="M488.2 427.3L498.1 440.7" stroke="#5a7fe0" stroke-width="0.7"/><circle cx="498.1" cy="440.7" r="1.4" fill="#5a7fe0"/>
<path d="M539.2 405.4L534.4 421.5" stroke="#5a7fe0" stroke-width="0.7"/><circle cx="534.4" cy="421.5" r="1.4" fill="#5a7fe0"/>
<rect x="268.5" y="366.1" width="3" height="3" fill="#eef2ff" stroke="#6f8fe6" stroke-width="0.55"/>
<rect x="322.0" y="322.8" width="3" height="3" fill="#eef2ff" stroke="#6f8fe6" stroke-width="0.55"/>
<rect x="341.2" y="358.1" width="3" height="3" fill="#eef2ff" stroke="#6f8fe6" stroke-width="0.55"/>
<rect x="352.5" y="292.9" width="3" height="3" fill="#eef2ff" stroke="#6f8fe6" stroke-width="0.55"/>
<rect x="427.5" y="283.5" width="3" height="3" fill="#eef2ff" stroke="#6f8fe6" stroke-width="0.55"/>
<rect x="383.7" y="355.5" width="3" height="3" fill="#eef2ff" stroke="#6f8fe6" stroke-width="0.55"/>
<rect x="464.5" y="290.0" width="3" height="3" fill="#eef2ff" stroke="#6f8fe6" stroke-width="0.55"/>
<rect x="527.4" y="310.8" width="3" height="3" fill="#eef2ff" stroke="#6f8fe6" stroke-width="0.55"/>
<rect x="465.6" y="350.2" width="3" height="3" fill="#eef2ff" stroke="#6f8fe6" stroke-width="0.55"/>
<rect x="550.1" y="350.7" width="3" height="3" fill="#eef2ff" stroke="#6f8fe6" stroke-width="0.55"/>
<rect x="543.2" y="383.1" width="3" height="3" fill="#eef2ff" stroke="#6f8fe6" stroke-width="0.55"/>
<rect x="505.6" y="387.6" width="3" height="3" fill="#eef2ff" stroke="#6f8fe6" stroke-width="0.55"/>
<rect x="537.7" y="403.9" width="3" height="3" fill="#eef2ff" stroke="#6f8fe6" stroke-width="0.55"/>
<rect x="486.7" y="425.6" width="3" height="3" fill="#eef2ff" stroke="#6f8fe6" stroke-width="0.55"/>
<rect x="468.7" y="397.5" width="3" height="3" fill="#eef2ff" stroke="#6f8fe6" stroke-width="0.55"/>
<rect x="472.0" y="457.2" width="3" height="3" fill="#eef2ff" stroke="#6f8fe6" stroke-width="0.55"/>
<rect x="414.2" y="447.7" width="3" height="3" fill="#eef2ff" stroke="#6f8fe6" stroke-width="0.55"/>
<rect x="435.4" y="412.5" width="3" height="3" fill="#eef2ff" stroke="#6f8fe6" stroke-width="0.55"/>
<rect x="352.6" y="470.3" width="3" height="3" fill="#eef2ff" stroke="#6f8fe6" stroke-width="0.55"/>
<rect x="314.3" y="443.1" width="3" height="3" fill="#eef2ff" stroke="#6f8fe6" stroke-width="0.55"/>
<rect x="397.7" y="420.2" width="3" height="3" fill="#eef2ff" stroke="#6f8fe6" stroke-width="0.55"/>
<rect x="263.1" y="437.2" width="3" height="3" fill="#eef2ff" stroke="#6f8fe6" stroke-width="0.55"/>
<rect x="243.3" y="411.0" width="3" height="3" fill="#eef2ff" stroke="#6f8fe6" stroke-width="0.55"/>
<rect x="285.5" y="409.4" width="3" height="3" fill="#eef2ff" stroke="#6f8fe6" stroke-width="0.55"/>
<rect x="275.9" y="395.5" width="3" height="3" fill="#eef2ff" stroke="#6f8fe6" stroke-width="0.55"/>
<rect x="319.6" y="385.0" width="3" height="3" fill="#eef2ff" stroke="#6f8fe6" stroke-width="0.55"/>
<ellipse cx="23.200" cy="160" rx="21" ry="14.200" fill="none" stroke="#f00a14" stroke-width="3.8"/>
<path d="M146.800 257L48 172.500" fill="none" stroke="#f00a14" stroke-width="3.7" stroke-linecap="round"/><path d="M63.500 176L47 171.500L52.800 188" fill="none" stroke="#f00a14" stroke-width="4.3" stroke-linecap="round" stroke-linejoin="round"/>
<path d="M567.300 544.800L464 438" fill="none" stroke="#f00a14" stroke-width="3.600" stroke-linecap="round"/><path d="M479 441.800L462.800 436.800L467 453" fill="none" stroke="#f00a14" stroke-width="4" stroke-linecap="round" stroke-linejoin="round"/>
</svg></body></html>
